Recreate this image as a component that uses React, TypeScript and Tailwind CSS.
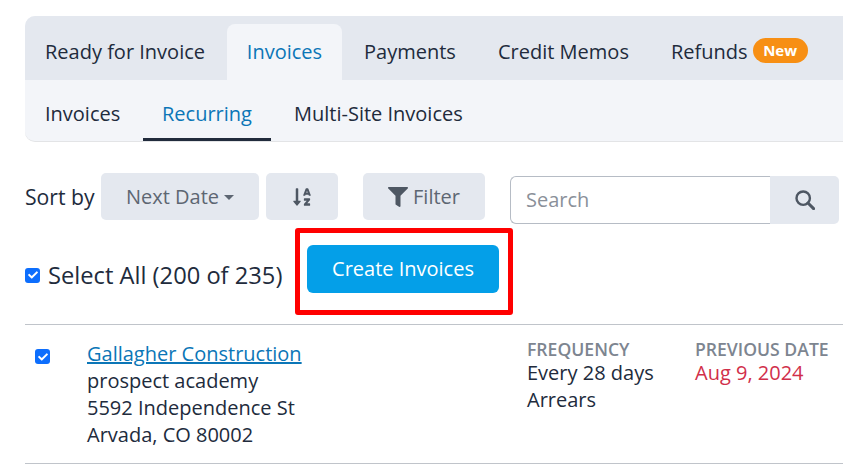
import React from "react";
import { FaSortAlphaDown, FaFilter, FaCheck } from "react-icons/fa";

function Check({ className }: { className: string }) {
  return (
    <span className={`flex h-[15px] w-[15px] shrink-0 items-center justify-center rounded-[3px] bg-[#0d6efd] ${className}`}>
      <FaCheck className="h-[10px] w-[10px] text-white" />
    </span>
  );
}

export default function App() {
  return (
    <div className="relative h-[467px] w-[843px] overflow-hidden bg-white pl-[25px] pt-[16px] text-[#212b3c] font-['Open_Sans',sans-serif]">
      <div className="w-[900px] overflow-hidden rounded-[10px] border-b border-[#e3e4e6] bg-[#f3f5f9]">
        <div className="flex h-[64px] items-end bg-[#e4e8ef] text-[20px] leading-[56px]">
          <div className="h-[56px] w-[202px] pl-[20px]">Ready for Invoice</div>
          <div className="h-[56px] w-[115px] rounded-t-[8px] bg-[#f3f5f9] text-center text-[#0b76b7]">Invoices</div>
          <div className="h-[56px] w-[135px] pl-[22px]">Payments</div>
          <div className="h-[56px] w-[173px] pl-[21px]">Credit Memos</div>
          <div className="flex h-[56px] items-center pl-[21px]">
            <span>Refunds</span>
            <span className="ml-[5px] mb-[3px] flex h-[25px] w-[55px] items-center justify-center rounded-full bg-[#f78f14] text-[15px] font-bold leading-none text-white">New</span>
          </div>
        </div>
        <div className="flex h-[61px] text-[20px] leading-[68px]">
          <div className="w-[118px] pl-[20px]">Invoices</div>
          <div className="h-[61px] w-[128px] border-b-[3px] border-[#212b3c] text-center text-[#0b76b7]">Recurring</div>
          <div className="pl-[23px]">Multi-Site Invoices</div>
        </div>
      </div>

      <div className="mt-[31px] flex h-[47px] items-start text-[20px]">
        <span className="mt-[6px] w-[76px] text-[21.2px] leading-[36px]">Sort by</span>
        <div className="flex h-[47px] w-[158px] items-center justify-center rounded-[5px] bg-[#e4e8ef] text-[#5d6672]">
          Next Date
          <span className="ml-[5px] mt-[2px] h-0 w-0 border-x-[5px] border-t-[5px] border-x-transparent border-t-[#5d6672]" />
        </div>
        <div className="ml-[7px] flex h-[47px] w-[72px] items-center justify-center rounded-[5px] bg-[#e4e8ef] text-[#4e5763]">
          <FaSortAlphaDown className="h-[20px] w-[22px]" />
        </div>
        <div className="ml-[25px] flex h-[47px] w-[122px] items-center justify-center rounded-[5px] bg-[#e4e8ef] text-[#5d6672]">
          <FaFilter className="mr-[5px] h-[20px] w-[20px] text-[#4e5763]" />
          Filter
        </div>
        <div className="ml-[25px] mt-[3px] flex h-[48px] w-[329px]">
          <div className="flex h-[48px] w-[260px] items-center rounded-l-[6px] border border-r-0 border-[#b6bcc5] bg-white pl-[15px] text-[#8a9099]">Search</div>
          <div className="flex h-[48px] w-[69px] items-center justify-center rounded-r-[5px] bg-[#e4e8ef]">
            <svg viewBox="0 0 20 20" className="h-[20px] w-[20px]" fill="none" stroke="#4e5763">
              <circle cx="8.2" cy="8.2" r="6.7" strokeWidth="2.4" />
              <path d="M13 13L18.6 18.6" strokeWidth="3" strokeLinecap="round" />
            </svg>
          </div>
        </div>
      </div>

      <div className="mt-[25px] flex h-[48px] items-start">
        <div className="mt-[12px] flex w-[282px] items-center">
          <Check className="" />
          <span className="ml-[8px] text-[23.7px] leading-[36px]">Select All (200 of 235)</span>
        </div>
        <button className="h-[48px] w-[192px] rounded-[6px] bg-[#049fe8] text-[20px] text-white">Create Invoices</button>
      </div>

      <div className="mt-[31px] flex h-[140px] w-[900px] border-y border-[#c0c4ca] text-[20px] leading-[27px]">
        <Check className="ml-[10px] mt-[24px]" />
        <div className="ml-[37px] mt-[15px] w-[440px]">
          <div className="text-[#0b76b7] underline">Gallagher Construction</div>
          <div>prospect academy</div>
          <div>5592 Independence St</div>
          <div>Arvada, CO 80002</div>
        </div>
        <div className="mt-[14px] w-[168px]">
          <div className="text-[17.6px] font-semibold leading-[20px] text-[#7d8590]">FREQUENCY</div>
          <div>Every 28 days</div>
          <div>Arrears</div>
        </div>
        <div className="mt-[14px]">
          <div className="text-[17.6px] font-semibold leading-[20px] text-[#7d8590]">PREVIOUS DATE</div>
          <div className="text-[#d12f4a]">Aug 9, 2024</div>
        </div>
      </div>

      <div className="absolute left-[295px] top-[228px] h-[87px] w-[218px] rounded-[3px] border-[5px] border-[#ff0000]" />
    </div>
  );
}
